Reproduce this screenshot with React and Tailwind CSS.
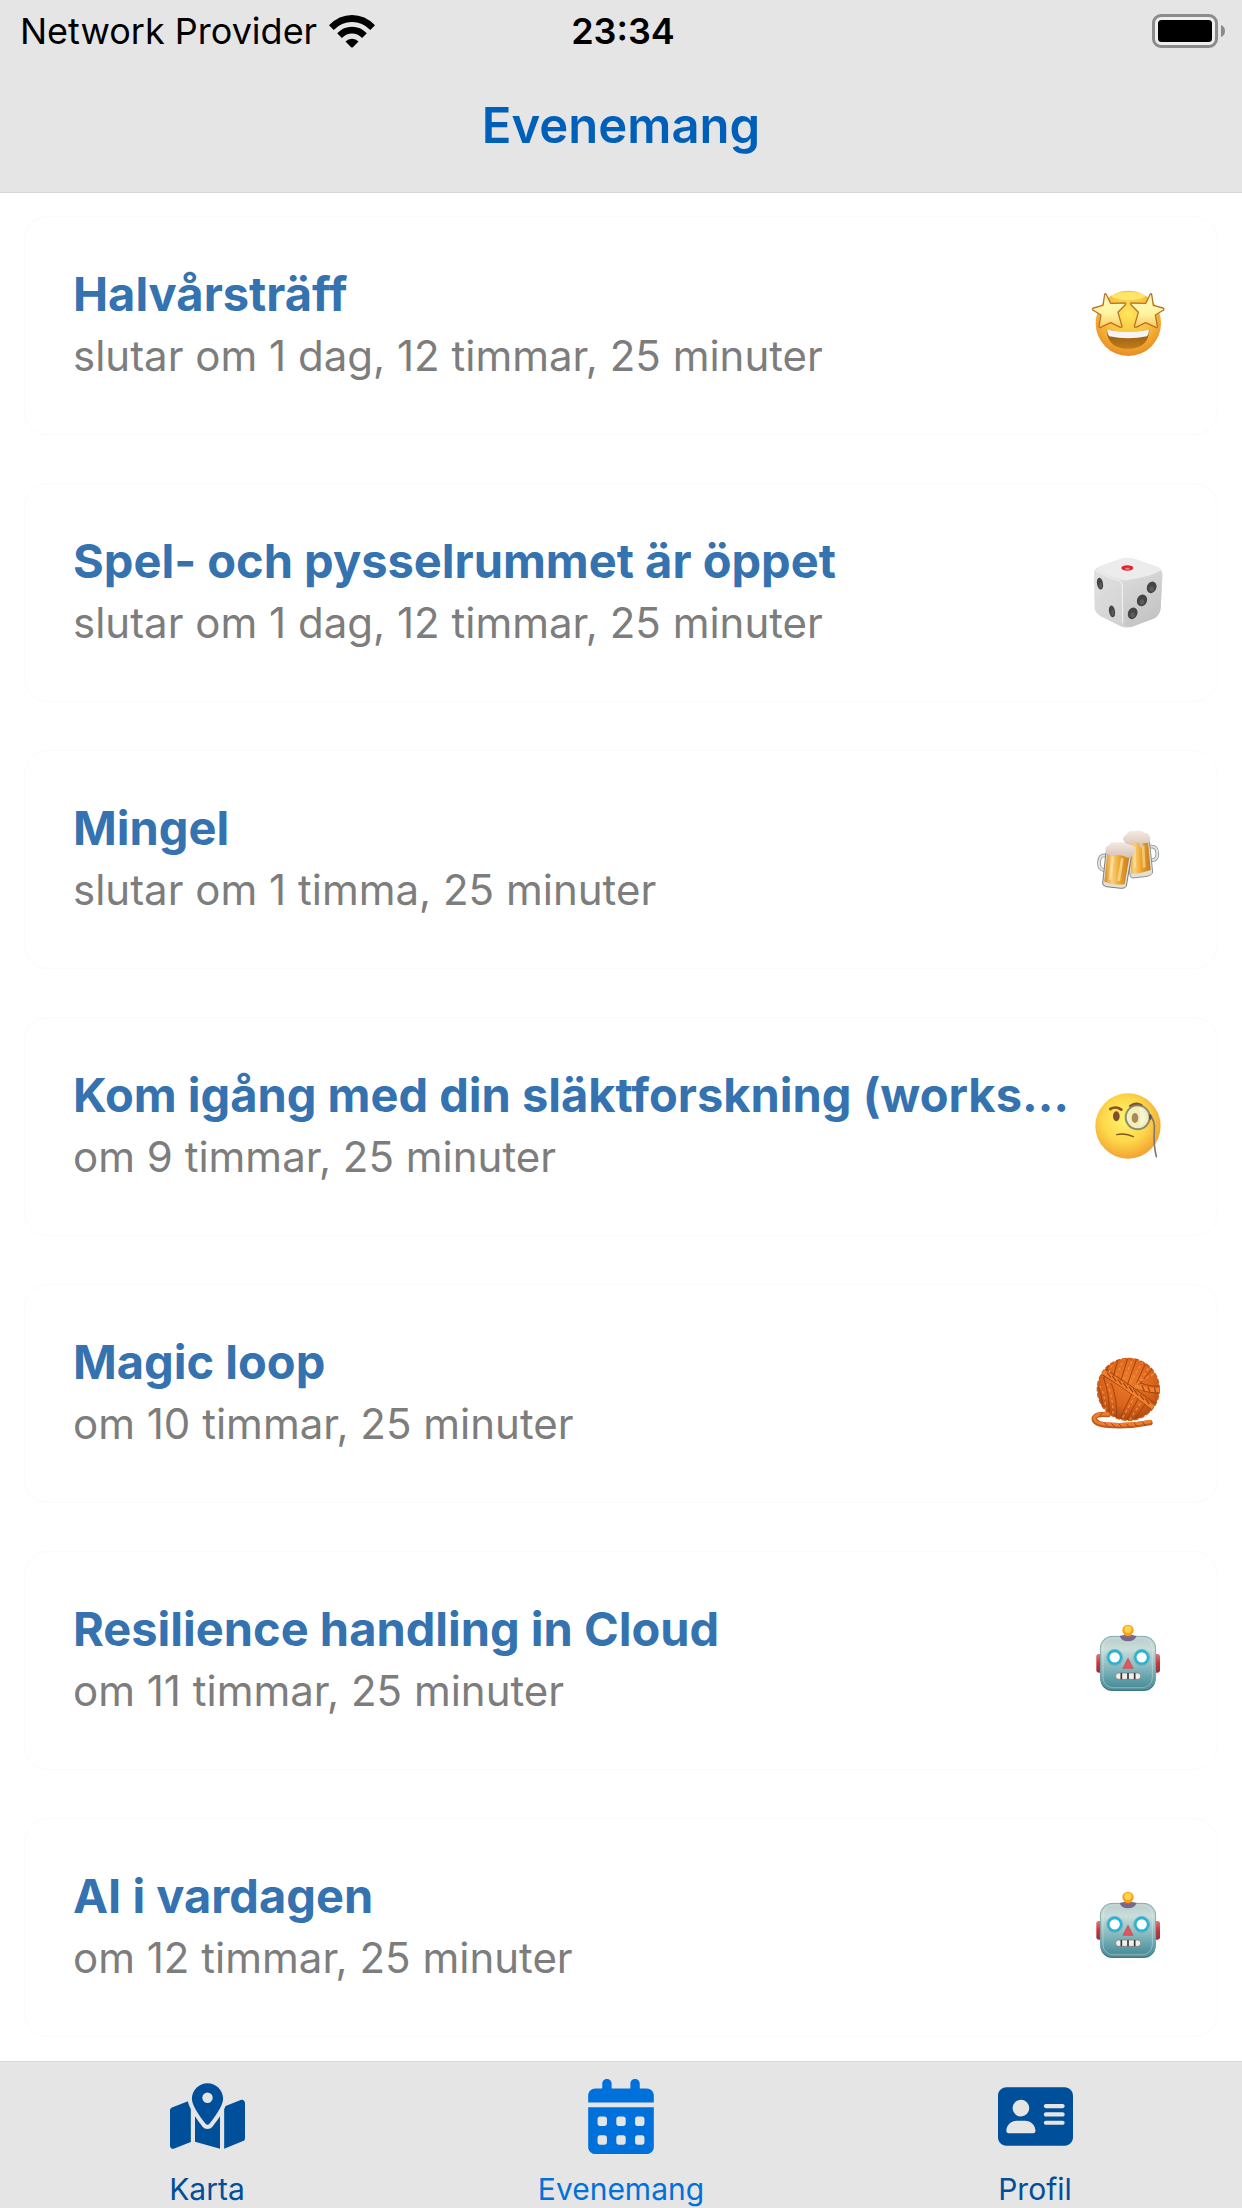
import React from "react";
import { FaMapLocationDot, FaCalendarDays, FaAddressCard } from "react-icons/fa6";

function Wifi() {
  return (
    <svg viewBox="0 0 46 33" className="w-[46px] h-[33px]" aria-hidden="true">
      <path d="M0 10.2Q10 0 23 0T46 10.2L41.3 14.9Q33.500 7 23 7T4.700 14.900Z" />
      <path d="M8.200 18.200Q14.500 11.800 23 11.800T37.800 18.200L33.100 22.900Q28.500 18.500 23 18.500T12.900 22.900Z" />
      <path d="M16.500 26.500Q19 23.800 23 23.800T29.500 26.500L23.900 32.200Q23 33 22.100 32.200Z" />
    </svg>
  );
}

function Battery() {
  return (
    <svg viewBox="0 0 74 34" className="w-[74px] h-[34px]" aria-hidden="true">
      <rect x="1.500" y="1.500" width="63" height="31" rx="7.500" fill="#eee" stroke="#8b8b8b" strokeWidth="3" />
      <rect x="6" y="6" width="54" height="22" rx="3.500" />
      <path d="M69 11Q73 12.500 73 17T69 23Z" fill="#8b8b8b" />
    </svg>
  );
}

const emojiClass = "w-[76px] h-[76px] shrink-0";

function StarStruck() {
  const star = "M78 42 L92 70 L135 69 Q139 70 136 74 L114 97 L126 139 Q126 143 121 142 L92 128 L60 143 Q56 143 57 138 L63 105 L38 90 Q36 86 40 84 L69 76 L74 43 Q76 40 78 42Z";
  return (
    <svg viewBox="30 24 228 228" className={emojiClass} role="img" aria-label="Stjärnögon">
      <defs>
        <radialGradient id="ssFace" cx="0.5" cy="0.35" r="0.65">
          <stop offset="0" stopColor="#ffe75c" />
          <stop offset="0.6" stopColor="#f9bb38" />
          <stop offset="1" stopColor="#e88c26" />
        </radialGradient>
        <linearGradient id="ssStar" x1="0" y1="0" x2="0" y2="1">
          <stop offset="0" stopColor="#fffbc4" />
          <stop offset="0.6" stopColor="#fff3a0" />
          <stop offset="1" stopColor="#fbc75c" />
        </linearGradient>
        <linearGradient id="ssMouth" x1="0" y1="0" x2="0" y2="1">
          <stop offset="0" stopColor="#8e5410" />
          <stop offset="1" stopColor="#c07c1c" />
        </linearGradient>
      </defs>
      <circle cx="145" cy="130" r="98" fill="url(#ssFace)" />
      <ellipse cx="145" cy="48" rx="50" ry="12" fill="#fff27a" opacity="0.7" />
      <path d="M80 149Q144 160 208 149Q206 206 144 206T80 149Z" fill="url(#ssMouth)" />
      <path d="M81 149Q144 160 207 149Q207 162 201 169Q144 181 88 169Q82 162 81 149Z" fill="#f7f5f3" />
      <path d={star} fill="url(#ssStar)" stroke="#b87428" strokeWidth="4" strokeLinejoin="round" />
      <g transform="translate(289 0) scale(-1 1)">
        <path d={star} fill="url(#ssStar)" stroke="#b87428" strokeWidth="4" strokeLinejoin="round" />
      </g>
    </svg>
  );
}

function Die() {
  return (
    <svg viewBox="30 30 228 228" className={emojiClass} role="img" aria-label="Tärning">
      <defs>
        <linearGradient id="dieL" x1="0" y1="0" x2="1" y2="1">
          <stop offset="0" stopColor="#e2e2e2" />
          <stop offset="1" stopColor="#cbcbcb" />
        </linearGradient>
        <linearGradient id="dieR" x1="0" y1="0" x2="0.4" y2="1">
          <stop offset="0" stopColor="#ddd" />
          <stop offset="1" stopColor="#c4c4c4" />
        </linearGradient>
      </defs>
      <path d="M42 88Q40 73 57 65L122 42Q145 36 166 43L232 66Q246 72 247 88L242 190Q240 209 224 220L160 244Q140 252 119 242L60 213Q45 202 44 190Z" fill="url(#dieL)" />
      <path d="M126 124Q126 108 146 105L235 78Q247 78 247 92L242 190Q240 209 224 220L160 244Q128 253 127 220Z" fill="url(#dieR)" />
      <path d="M49 72Q52 66 64 62L122 42Q145 36 166 43L232 66Q241 70 243 76Q205 98 147 104Q128 108 119 102Q78 93 49 72Z" fill="#ececec" />
      <path d="M48 76Q82 98 115 105Q127 110 127 128L128 235" fill="none" stroke="#ededed" strokeWidth="4" />
      <ellipse cx="142" cy="69" rx="18" ry="8" fill="#e32636" />
      <ellipse cx="142" cy="71" rx="7" ry="3" fill="#f58084" />
      <g fill="#454545">
        <ellipse cx="60" cy="116" rx="9" ry="18" transform="rotate(-10 60 116)" />
        <ellipse cx="96" cy="199" rx="9" ry="18" transform="rotate(-10 96 199)" />
        <ellipse cx="215" cy="127" rx="14" ry="18" transform="rotate(25 215 127)" />
        <ellipse cx="186" cy="166" rx="15" ry="18" transform="rotate(25 186 166)" />
        <ellipse cx="158" cy="205" rx="14" ry="18" transform="rotate(25 158 205)" />
      </g>
      <g fill="#5c5c5c">
        <ellipse cx="62" cy="121" rx="4" ry="9" />
        <ellipse cx="98" cy="203" rx="4" ry="9" />
        <ellipse cx="215" cy="132" rx="7" ry="8" />
        <ellipse cx="186" cy="171" rx="7" ry="8" />
        <ellipse cx="158" cy="210" rx="7" ry="8" />
      </g>
    </svg>
  );
}

function Beers() {
  return (
    <svg viewBox="30 21 228 228" className={emojiClass} role="img" aria-label="Ölglas">
      <defs>
        <linearGradient id="beer" x1="0" y1="0" x2="1" y2="0">
          <stop offset="0" stopColor="#d88a21" />
          <stop offset="0.3" stopColor="#fbd07c" />
          <stop offset="0.6" stopColor="#eda62c" />
          <stop offset="1" stopColor="#c8781c" />
        </linearGradient>
        <linearGradient id="foam" x1="0" y1="0" x2="0" y2="1">
          <stop offset="0" stopColor="#f5ebe4" />
          <stop offset="1" stopColor="#d6c0b5" />
        </linearGradient>
      </defs>
      <g fill="none" strokeLinecap="round">
        <path d="M211 95Q231 92 232 115Q233 135 214 136" stroke="#8f9693" strokeWidth="11" />
        <path d="M211 95Q231 92 232 115Q233 135 214 136" stroke="#e2e6e2" strokeWidth="6" />
      </g>
      <path d="M136 84L208 76L218 171Q216 181 201 184L159 189Q151 188 150 180Z" fill="#dde0db" stroke="#96908a" strokeWidth="3" />
      <path d="M141 86L204 80L212 165Q184 176 154 176Z" fill="url(#beer)" />
      <path d="M163 95L165 160M189 91L193 158" stroke="#ffe3a4" strokeWidth="8" opacity="0.6" />
      <path d="M130 76Q126 65 139 59Q145 44 162 49Q181 42 194 53Q210 55 210 70Q214 81 202 84Q193 83 188 85L187 97Q182 101 179 94L177 82Q165 80 156 87Q141 92 130 76Z" fill="url(#foam)" />
      <g fill="none" strokeLinecap="round">
        <path d="M78 122Q59 117 57 141Q55 163 75 166" stroke="#8f9693" strokeWidth="11" />
        <path d="M78 122Q59 117 57 141Q55 163 75 166" stroke="#e2e6e2" strokeWidth="6" />
      </g>
      <path d="M78 112L155 119L139 213Q136 221 123 220L78 215Q67 212 68 204Z" fill="#dde0db" stroke="#857c74" strokeWidth="3" />
      <path d="M82 114L149 121L134 208Q102 212 73 200Z" fill="url(#beer)" />
      <path d="M99 125L90 194M127 130L116 198" stroke="#ffe7b0" strokeWidth="8" opacity="0.65" />
      <path d="M78 113Q71 96 87 90Q96 76 113 83Q130 77 143 87Q163 88 164 104Q167 119 153 126Q142 132 133 124Q119 119 107 120Q94 125 90 119Q81 121 78 113Z" fill="url(#foam)" />
    </svg>
  );
}

function Monocle() {
  return (
    <svg viewBox="30 27 228 228" className={emojiClass} role="img" aria-label="Monokel">
      <defs>
        <radialGradient id="monoFace" cx="0.45" cy="0.4" r="0.62">
          <stop offset="0" stopColor="#fff46e" />
          <stop offset="0.55" stopColor="#fdd84a" />
          <stop offset="1" stopColor="#f29f30" />
        </radialGradient>
      </defs>
      <circle cx="144" cy="138" r="98" fill="url(#monoFace)" />
      <g fill="none" stroke="#885020" strokeLinecap="round">
        <path d="M91 87Q108 77 124 89" strokeWidth="8" />
        <path d="M151 78Q169 66 184 76" strokeWidth="8" />
        <path d="M110 164Q137 158 160 170" strokeWidth="4" />
      </g>
      <ellipse cx="109" cy="109" rx="10" ry="15" fill="#81502a" />
      <circle cx="173" cy="112" r="36" fill="#f1f1c9" opacity="0.85" stroke="#777e78" strokeWidth="6" />
      <ellipse cx="165" cy="114" rx="10" ry="15" fill="#a98957" />
      <path d="M176 82Q198 91 198 116Q190 136 178 137Q186 105 176 82Z" fill="#fff" opacity="0.4" />
      <path d="M209 105Q226 119 223 155Q220 193 229 230" fill="none" stroke="#807b72" strokeWidth="5" strokeLinecap="round" />
      <ellipse cx="211" cy="111" rx="4" ry="9" fill="#555" />
    </svg>
  );
}

function Yarn() {
  return (
    <svg viewBox="30 33 228 228" className={emojiClass} role="img" aria-label="Garn">
      <defs>
        <radialGradient id="yarnG" cx="0.5" cy="0.35" r="0.7">
          <stop offset="0" stopColor="#ec7a2a" />
          <stop offset="0.6" stopColor="#d9651c" />
          <stop offset="1" stopColor="#a2430f" />
        </radialGradient>
        <clipPath id="yarnClip">
          <circle cx="145" cy="133" r="93" />
        </clipPath>
      </defs>
      <circle cx="145" cy="133" r="93" fill="url(#yarnG)" stroke="#cc5c1a" strokeWidth="4" strokeDasharray="14 5" />
      <g clipPath="url(#yarnClip)" fill="none">
        <g stroke="#a0440f" strokeWidth="3">
          <path d="M72 100L94 36M96 108L118 30M118 122L146 30M138 130L174 30M158 140L202 44M178 118L226 60M50 115Q70 155 66 190M70 96Q90 150 87 213M94 115Q112 160 110 225M116 228L157 145M137 230L178 155M159 232L200 170M60 85Q136 130 218 195M68 67Q145 115 232 180M166 130Q210 145 242 145M180 113Q215 128 244 122" />
        </g>
        <g stroke="#f0822f" strokeWidth="13">
          <path d="M63 76Q145 128 220 188" />
          <path d="M164 123Q205 137 243 134" />
        </g>
        <g stroke="#a64813" strokeWidth="4">
          <path d="M81 82l12 16M97 93l12 16M113 103l12 16M130 114l12 16M147 125l12 16M163 136l12 16M180 149l12 16M196 161l12 16M186 122l7 16M204 126l6 16M223 127l4 15" />
        </g>
        <g stroke="#f48a3c" strokeWidth="4" strokeDasharray="9 8">
          <path d="M86 84L106 40M108 92L132 40M130 104L160 40M150 114L190 46M170 118L212 61M60 122Q78 160 77 202M81 116Q101 160 99 218M128 218L166 150M149 225L188 165M183 107L232 81" />
        </g>
      </g>
      <path d="M84 209Q48 206 43 219Q40 235 76 240Q140 247 210 233" fill="none" stroke="#c4581a" strokeWidth="16" strokeLinecap="round" />
      <path d="M84 207Q48 204 44 218Q42 232 76 237Q140 244 210 230" fill="none" stroke="#ef7d2e" strokeWidth="10" strokeLinecap="round" />
      <path d="M68 202l-9 12M47 220l11 10M72 232l12 12M94 235l12 12M117 237l11 11M140 237l10 11M163 234l10 12M187 230l9 12" stroke="#a34612" strokeWidth="3" />
    </svg>
  );
}

function Robot() {
  return (
    <svg viewBox="30 24 228 228" className={emojiClass} role="img" aria-label="Robot">
      <defs>
        <linearGradient id="robHead" x1="0" y1="0" x2="0" y2="1">
          <stop offset="0" stopColor="#b9cdca" />
          <stop offset="0.25" stopColor="#c8dedb" />
          <stop offset="0.75" stopColor="#69a7b0" />
          <stop offset="1" stopColor="#468895" />
        </linearGradient>
        <linearGradient id="robEar" x1="0" y1="0" x2="0" y2="1">
          <stop offset="0" stopColor="#e5747b" />
          <stop offset="0.5" stopColor="#c9343c" />
          <stop offset="1" stopColor="#96313b" />
        </linearGradient>
      </defs>
      <rect x="49" y="117" width="20" height="56" rx="7" fill="url(#robEar)" />
      <rect x="220" y="117" width="20" height="56" rx="7" fill="url(#robEar)" />
      <rect x="61" y="64" width="166" height="164" rx="36" fill="#397a86" />
      <rect x="61" y="64" width="166" height="158" rx="36" fill="url(#robHead)" stroke="#7fa5a7" strokeWidth="2" />
      <rect x="69" y="69" width="148" height="149" rx="30" fill="none" stroke="#e7f1ee" strokeWidth="3" opacity="0.4" />
      <path d="M119 63Q144 54 170 63Q164 79 144 79T119 63Z" fill="#79668d" />
      <rect x="134" y="50" width="20" height="14" fill="#cc7e25" />
      <circle cx="144" cy="46" r="17" fill="#f8a01f" />
      <circle cx="144" cy="43" r="11" fill="#ffd247" />
      <g fill="#fff" stroke="#1fb4d4" strokeWidth="7">
        <circle cx="104" cy="127" r="19" />
        <circle cx="185" cy="127" r="19" />
      </g>
      <g fill="none" stroke="#5c9fae" strokeWidth="2">
        <circle cx="104" cy="127" r="24" />
        <circle cx="185" cy="127" r="24" />
      </g>
      <path d="M144 130L159 160H129Z" fill="#e2555b" stroke="#b94c53" strokeWidth="2" strokeLinejoin="round" />
      <rect x="107" y="174" width="75" height="19" rx="9" fill="#f3eee9" stroke="#777" strokeWidth="2" />
      <path d="M124 174v19M144 174v19M164 174v19" stroke="#38383a" strokeWidth="5" />
    </svg>
  );
}

const events = [
  { title: "Halvårsträff", when: "slutar om 1 dag, 12 timmar, 25 minuter", Icon: StarStruck },
  { title: "Spel- och pysselrummet är öppet", when: "slutar om 1 dag, 12 timmar, 25 minuter", Icon: Die },
  { title: "Mingel", when: "slutar om 1 timma, 25 minuter", Icon: Beers },
  { title: "Kom igång med din släktforskning (works…", when: "om 9 timmar, 25 minuter", Icon: Monocle },
  { title: "Magic loop", when: "om 10 timmar, 25 minuter", Icon: Yarn },
  { title: "Resilience handling in Cloud", when: "om 11 timmar, 25 minuter", Icon: Robot },
  { title: "AI i vardagen", when: "om 12 timmar, 25 minuter", Icon: Robot },
];

const tabs = [
  { label: "Karta", Icon: FaMapLocationDot, size: "w-[75px] h-[67px]" },
  { label: "Evenemang", Icon: FaCalendarDays, size: "w-[66px] h-[75px]", active: true },
  { label: "Profil", Icon: FaAddressCard, size: "w-[75px] h-[67px]" },
];

export default function App() {
  return (
    <div className="min-h-screen flex flex-col bg-white font-['Inter',sans-serif]">
      <header className="bg-[#e5e5e5] border-b border-[#d8d8d8]">
        <div className="grid grid-cols-[1fr_auto_1fr] items-center h-[60px] pl-5 pr-4 text-[36px] leading-[62px] text-black">
          <div className="flex items-center gap-3">
            <span>Network Provider</span>
            <Wifi />
          </div>
          <time className="font-semibold">23:34</time>
          <div className="flex justify-end">
            <Battery />
          </div>
        </div>
        <h1 className="h-[132px] pt-8 pb-8 text-center text-[49px] leading-[68px] font-semibold text-[#0060b9]">
          Evenemang
        </h1>
      </header>

      <main className="grow px-6 pt-[23px] pb-6">
        <ul className="flex flex-col gap-12">
          {events.map(({ title, when, Icon }) => (
            <li key={title}>
              <a
                href="#"
                className="flex items-center gap-2 h-[219px] pl-12 pr-[51px] rounded-3xl border border-[#fbfbfb]"
              >
                <div className="grow min-w-0 pb-1">
                  <h2 className="truncate text-[47px] leading-[64px] font-bold text-[#3572b0]">{title}</h2>
                  <p className="text-[42px] leading-[60px] text-[#7d7d7d]">{when}</p>
                </div>
                <Icon />
              </a>
            </li>
          ))}
        </ul>
      </main>

      <nav className="grid grid-cols-3 h-[147px] bg-[#e5e5e5] border-t border-[#d8d8d8]">
        {tabs.map(({ label, Icon, size, active }) => (
          <button
            key={label}
            type="button"
            aria-current={active ? "page" : undefined}
            className={
              active
                ? "flex flex-col items-center text-[#0070db]"
                : "flex flex-col items-center text-[#004f9b]"
            }
          >
            <span className="flex items-center justify-center h-[108px]">
              <Icon className={size} />
            </span>
            <span className="text-[30px] leading-[38px]">{label}</span>
          </button>
        ))}
      </nav>
    </div>
  );
}
